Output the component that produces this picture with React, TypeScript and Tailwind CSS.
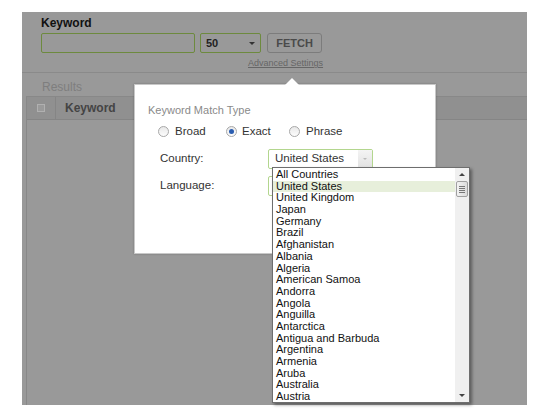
import React from "react";

const COUNTRIES = [
  "All Countries",
  "United States",
  "United Kingdom",
  "Japan",
  "Germany",
  "Brazil",
  "Afghanistan",
  "Albania",
  "Algeria",
  "American Samoa",
  "Andorra",
  "Angola",
  "Anguilla",
  "Antarctica",
  "Antigua and Barbuda",
  "Argentina",
  "Armenia",
  "Aruba",
  "Australia",
  "Austria",
];

function Radio({ checked }: { checked?: boolean }) {
  return (
    <span className="relative inline-block w-[11px] h-[11px] rounded-full border border-[#a8a8a8] bg-gradient-to-b from-[#e8e8e8] to-[#fdfdfd]">
      {checked && (
        <span className="absolute left-[2px] top-[2px] w-[5px] h-[5px] rounded-full bg-[#2a5db0]" />
      )}
    </span>
  );
}

export default function App() {
  return (
    <div className="w-[548px] h-[417px] bg-white pt-[12px] pl-[22px] font-['Liberation_Sans',Arial,sans-serif]">
      <div className="relative w-[505px] h-[393px] bg-[#999999] flex flex-col">
        {/* search header */}
        <div className="pl-[19px] pt-[4px] h-[61px] border-b border-[#8a8a8a]">
          <div className="text-[12px] font-bold text-[#111] leading-[14px]">Keyword</div>
          <div className="flex items-center mt-[3px] gap-[5px]">
            <div className="w-[154px] h-[20px] border border-[#6d8a3e] rounded-[2px]" />
            <div className="w-[61px] h-[20px] border border-[#6d8a3e] rounded-[2px] flex items-center justify-between px-[5px]">
              <span className="text-[11px] font-bold text-[#222]">50</span>
              <span className="w-0 h-0 border-l-[3px] border-r-[3px] border-t-[3px] border-l-transparent border-r-transparent border-t-[#333]" />
            </div>
            <div className="ml-[1px] w-[55px] h-[20px] border border-[#7c7c7c] rounded-[3px] flex items-center justify-center text-[11px] font-bold text-[#4a4a4a]">
              FETCH
            </div>
          </div>
          <div className="pl-[207px] mt-[4px] text-[9px] text-[#666] underline leading-[12px]">Advanced Settings</div>
        </div>

        {/* results */}
        <div className="pl-[20px] pt-[7px] h-[23px] text-[12px] text-[#7e7e7e] leading-[14px]">Results</div>
        <div className="ml-[4px] flex-1 border-l border-t border-[#888] flex flex-col">
          <div className="h-[23px] bg-[#909090] border-b border-[#858585] flex items-center">
            <div className="w-[29px] h-full flex items-center justify-center border-r border-[#858585]">
              <span className="w-[8px] h-[8px] border border-[#b0b0b0] bg-[#9a9a9a]" />
            </div>
            <span className="pl-[9px] text-[12px] font-bold text-[#444]">Keyword</span>
          </div>
          <div className="flex-1" />
        </div>

        {/* advanced settings popup */}
        <div className="absolute left-[112px] top-[72px] w-[302px] h-[170px] bg-white border border-[#c8c8c8] shadow-[0_0_2px_rgba(0,0,0,0.25)]">
          <div className="absolute left-[150px] top-[-7px] w-0 h-0 border-l-[7px] border-r-[7px] border-b-[7px] border-l-transparent border-r-transparent border-b-white" />
          <div className="pl-[13px] pt-[19px] text-[11px] text-[#8a8a8a] leading-[13px]">Keyword Match Type</div>
          <div className="flex items-center pl-[23px] mt-[8px] text-[11.5px] text-[#333] leading-[13px]">
            <Radio />
            <span className="ml-[6px] w-[51px]">Broad</span>
            <Radio checked />
            <span className="ml-[5px] w-[47px]">Exact</span>
            <Radio />
            <span className="ml-[6px]">Phrase</span>
          </div>
          <div className="flex items-center pl-[25px] mt-[11px] text-[11.5px] text-[#333]">
            <span className="w-[108px]">Country:</span>
            <div className="w-[105px] h-[20px] border border-[#b3d68e] rounded-[2px] flex items-center">
              <span className="flex-1 pl-[6px] text-[11.5px] text-[#333]">United States</span>
              <span className="w-[14px] h-full bg-gradient-to-b from-[#f4f4f4] to-[#e2e2e2] flex items-center justify-center">
                <span className="w-0 h-0 border-l-[2px] border-r-[2px] border-t-[2px] border-l-transparent border-r-transparent border-t-[#bbb]" />
              </span>
            </div>
          </div>
          <div className="flex items-center pl-[25px] mt-[7px] text-[11.5px] text-[#333]">
            <span className="w-[108px]">Language:</span>
            <div className="w-[105px] h-[20px] border border-[#b3d68e] rounded-[2px]" />
          </div>
        </div>

        {/* country dropdown list */}
        <div className="absolute left-[250px] top-[155px] w-[198px] h-[236px] bg-white border border-[#6e6e6e] shadow-[2px_2px_3px_rgba(0,0,0,0.4)] flex">
          <ul className="flex-1 pt-[1px] text-[11px] leading-[11.7px] text-[#111]">
            {COUNTRIES.map((c) => (
              <li key={c} className={`pl-[3px] h-[11.7px] ${c === "United States" ? "bg-[#e7efdb]" : ""}`}>
                {c}
              </li>
            ))}
          </ul>
          <div className="w-[14px] bg-[#f0f0f0] flex flex-col items-center">
            <div className="h-[13px] w-full flex items-center justify-center">
              <span className="w-0 h-0 border-l-[3px] border-r-[3px] border-b-[3px] border-l-transparent border-r-transparent border-b-[#444]" />
            </div>
            <div className="w-[12px] h-[16px] border border-[#a0a0a0] rounded-[2px] bg-gradient-to-r from-[#f2f2f2] to-[#dcdcdc] flex flex-col items-center justify-center gap-[1px]">
              <span className="w-[6px] h-px bg-[#777]" />
              <span className="w-[6px] h-px bg-[#777]" />
              <span className="w-[6px] h-px bg-[#777]" />
              <span className="w-[6px] h-px bg-[#777]" />
            </div>
            <div className="flex-1" />
            <div className="h-[13px] w-full flex items-center justify-center">
              <span className="w-0 h-0 border-l-[3px] border-r-[3px] border-t-[3px] border-l-transparent border-r-transparent border-t-[#444]" />
            </div>
          </div>
        </div>
      </div>
    </div>
  );
}
